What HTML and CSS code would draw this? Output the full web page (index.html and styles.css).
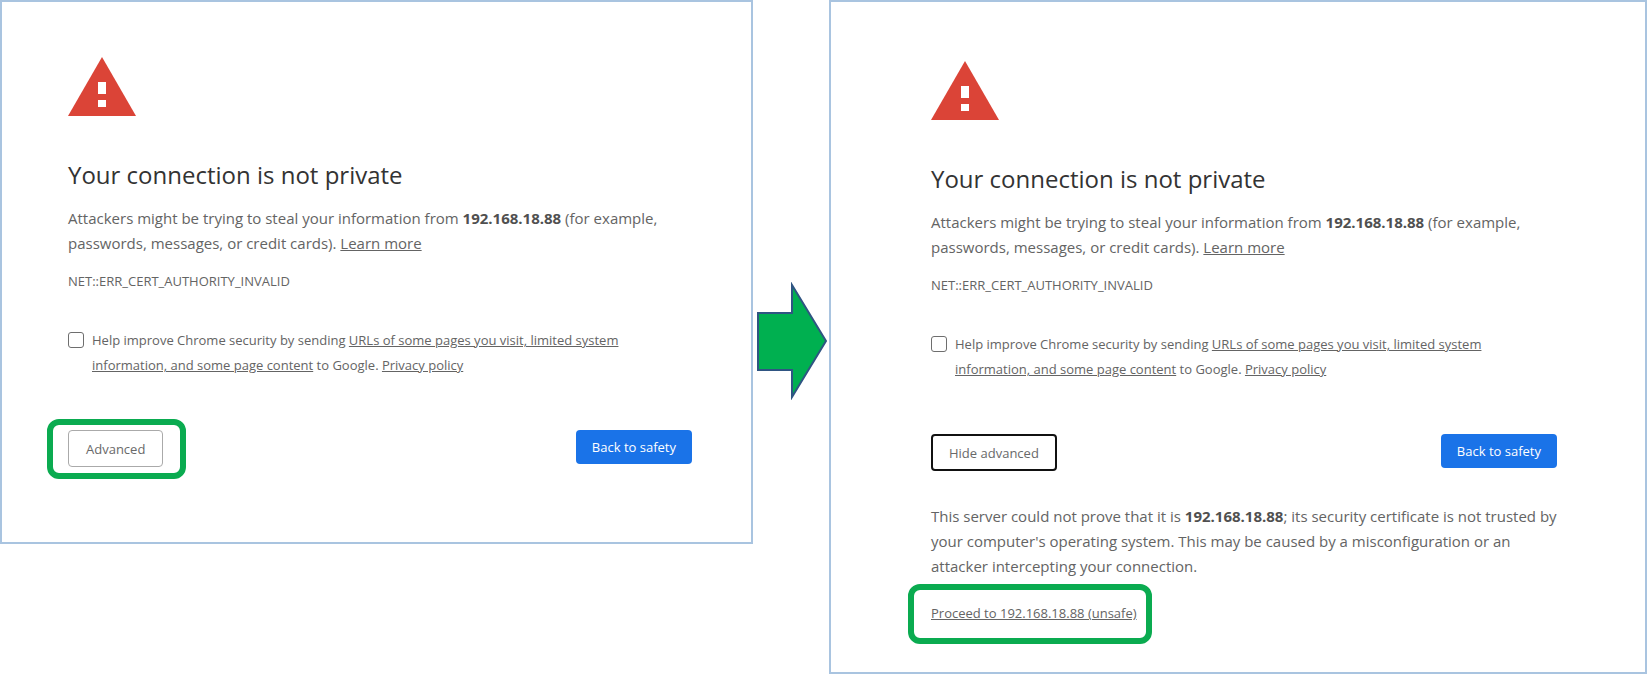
FILE: index.html
```html
<!DOCTYPE html>
<html lang="en">
<head>
	<meta charset="utf-8">
	<title>Your connection is not private</title>
	<link rel="stylesheet" href="styles.css">
</head>
<body>

	<main class="steps">

		<!-- step 1: open the advanced section -->
		<section class="panel panel-first">
			<svg class="warning" viewBox="0 0 68 60" role="img" aria-label="Warning">
				<path fill="#db4437" d="M34 0L68 59H0z"/>
				<path fill="#fff" d="M30 25h8v12h-8zM30 43h8v7h-8z"/>
			</svg>
			<h1>Your connection is not private</h1>
			<p class="message">Attackers might be trying to steal your information from <strong>192.168.18.88</strong> (for example,<br>passwords, messages, or credit cards). <a href="#">Learn more</a></p>
			<p class="code">NET::ERR_CERT_AUTHORITY_INVALID</p>
			<div class="optin">
				<input type="checkbox" id="optin-1">
				<label for="optin-1">Help improve Chrome security by sending <a href="#">URLs of some pages you visit, limited system<br>information, and some page content</a> to Google. <a href="#">Privacy policy</a></label>
			</div>
			<div class="buttons">
				<div class="mark mark-button"><button type="button" class="secondary">Advanced</button></div>
				<button type="button" class="primary">Back to safety</button>
			</div>
		</section>

		<div class="arrow">
			<svg viewBox="0 0 70 118" aria-hidden="true">
				<path fill="#00b050" stroke="#2f5582" stroke-width="2" d="M1 31H35V3L69 59L35 115V88H1z"/>
			</svg>
		</div>

		<!-- step 2: proceed to the site -->
		<section class="panel panel-second">
			<svg class="warning" viewBox="0 0 68 60" role="img" aria-label="Warning">
				<path fill="#db4437" d="M34 0L68 59H0z"/>
				<path fill="#fff" d="M30 25h8v12h-8zM30 43h8v7h-8z"/>
			</svg>
			<h1>Your connection is not private</h1>
			<p class="message">Attackers might be trying to steal your information from <strong>192.168.18.88</strong> (for example,<br>passwords, messages, or credit cards). <a href="#">Learn more</a></p>
			<p class="code">NET::ERR_CERT_AUTHORITY_INVALID</p>
			<div class="optin">
				<input type="checkbox" id="optin-2">
				<label for="optin-2">Help improve Chrome security by sending <a href="#">URLs of some pages you visit, limited system<br>information, and some page content</a> to Google. <a href="#">Privacy policy</a></label>
			</div>
			<div class="buttons">
				<button type="button" class="secondary focused">Hide advanced</button>
				<button type="button" class="primary">Back to safety</button>
			</div>
			<p class="details">This server could not prove that it is <strong>192.168.18.88</strong>; its security certificate is not trusted by<br>your computer's operating system. This may be caused by a misconfiguration or an<br>attacker intercepting your connection.</p>
			<div class="mark mark-link"><a href="#">Proceed to 192.168.18.88 (unsafe)</a></div>
		</section>

	</main>

</body>
</html>
```
FILE: styles.css
```css
*{
	box-sizing: border-box;
	margin: 0;
	padding: 0;
}
body{
	background: #fff;
	color: #646464;
	font-family: "Open Sans", "Noto Sans", sans-serif;
	font-size: 15px;
	line-height: 25px;
}
a{
	color: inherit;
	text-decoration: underline;
}
.steps{
	display: grid;
	grid-template-columns: 753fr 76fr 818fr;
	align-items: start;
}

/* panels */
.panel{
	border: 2px solid #a9c4e0;
	white-space: nowrap;
}
.panel-first{
	padding: 55px 59px 75px 66px;
}
.panel-second{
	padding: 59px 88px 47px 100px;
}
.warning{
	display: block;
	width: 68px;
	height: 60px;
}
h1{
	margin-top: 41px;
	color: #333;
	font-size: 24px;
	font-weight: 400;
	line-height: 34px;
}
.message{
	margin-top: 14px;
}
strong{
	color: #505050;
}
.code{
	margin-top: 13px;
	font-size: 13px;
	line-height: 24px;
}
.optin{
	display: flex;
	gap: 8px;
	margin-top: 35px;
	font-size: 13px;
}
.optin input{
	appearance: none;
	flex: none;
	width: 16px;
	height: 16px;
	margin-top: 4px;
	border: 1px solid #6e6e6e;
	border-radius: 3px;
}

/* buttons */
.buttons{
	display: flex;
	justify-content: space-between;
	align-items: flex-start;
	margin-top: 52px;
}
button{
	border-radius: 4px;
	font-family: inherit;
	font-size: 13px;
	line-height: 18px;
}
.secondary{
	display: block;
	padding: 9px 17px 8px;
	border: 1px solid #aaa;
	background: #fff;
	color: #696969;
}
.secondary.focused{
	padding: 8px 16px 7px;
	border: 2px solid #111;
}
.primary{
	padding: 8px 16px;
	border: 0;
	background: #1a73e8;
	color: #fff;
}
.details{
	margin-top: 33px;
}

/* green frame drawn around the thing to click */
.mark{
	position: relative;
	width: max-content;
}
.mark::after{
	content: "";
	position: absolute;
	border: 6px solid #0aab50;
	border-radius: 12px;
	pointer-events: none;
}
.mark-button::after{
	inset: -11px -23px -12px -21px;
}
.mark-link{
	margin-top: 22px;
	font-size: 13px;
	line-height: 24px;
}
.mark-link::after{
	inset: -17px -15px -19px -23px;
}

/* arrow between the panels */
.arrow{
	padding: 282px 2px 0 4px;
}
.arrow svg{
	display: block;
	width: 100%;
}
```
